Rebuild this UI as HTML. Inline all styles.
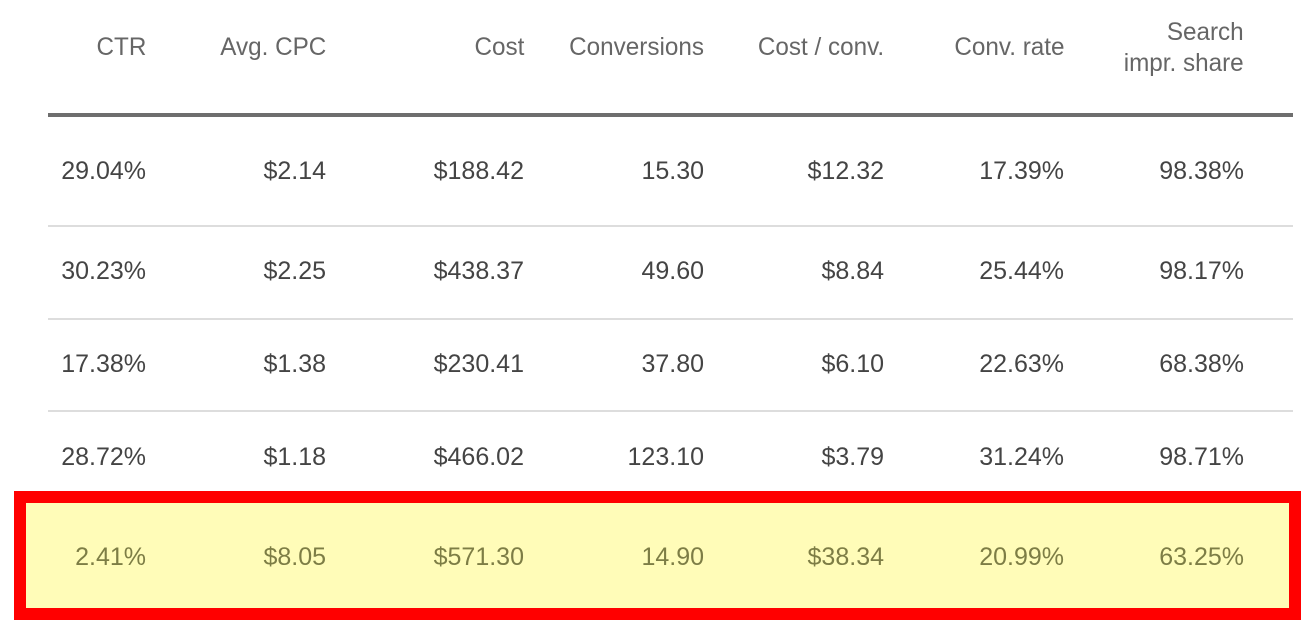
<!DOCTYPE html>
<html><head><meta charset="utf-8"><style>
html,body{margin:0;padding:0;background:#fff;width:1313px;height:635px;overflow:hidden;position:relative;font-family:"Liberation Sans",sans-serif;}
.t{position:absolute;white-space:nowrap;text-align:right;}
.h{color:#666;font-size:25px;line-height:26px;transform:scaleX(0.97);transform-origin:right center;}
.d{color:#444;font-size:25px;}
.y{color:#7d7d45;}
.line{position:absolute;left:48px;width:1245px;height:2px;background:#ddd;}
</style></head><body>
<div class="line" style="top:113px;height:4px;background:#6e6e6e"></div>
<div class="line" style="top:225px"></div>
<div class="line" style="top:318px"></div>
<div class="line" style="top:410px"></div>
<div style="position:absolute;left:14px;top:491px;width:1263px;height:105px;border:12px solid #ff0000;background:#fffcb8"></div>

<div class="t h" style="right:1167px;top:34px">CTR</div>
<div class="t h" style="right:987px;top:34px">Avg. CPC</div>
<div class="t h" style="right:789px;top:34px">Cost</div>
<div style="position:absolute;left:560px;top:34px;width:144px;overflow:hidden;height:30px"><div class="t h" style="right:0;top:0">Conversions</div></div>
<div class="t h" style="right:429px;top:34px">Cost / conv.</div>
<div class="t h" style="right:249px;top:34px">Conv. rate</div>
<div class="t h" style="right:69px;top:17px;line-height:31px">Search<br>impr. share</div>

<div id="rows"></div>
<script>
var data=[["29.04%","$2.14","$188.42","15.30","$12.32","17.39%","98.38%"],
["30.23%","$2.25","$438.37","49.60","$8.84","25.44%","98.17%"],
["17.38%","$1.38","$230.41","37.80","$6.10","22.63%","68.38%"],
["28.72%","$1.18","$466.02","123.10","$3.79","31.24%","98.71%"],
["2.41%","$8.05","$571.30","14.90","$38.34","20.99%","63.25%"]];
var ys=[171,271,364,457,557],rs=[146,326,524,704,884,1064,1244],h="";
data.forEach(function(r,i){r.forEach(function(v,j){h+='<div class="t d'+(i==4?' y':'')+'" style="right:'+(1313-rs[j])+'px;top:'+(ys[i]-15)+'px;line-height:30px">'+v+'</div>';});});
document.getElementById("rows").innerHTML=h;
</script>
</body></html>
